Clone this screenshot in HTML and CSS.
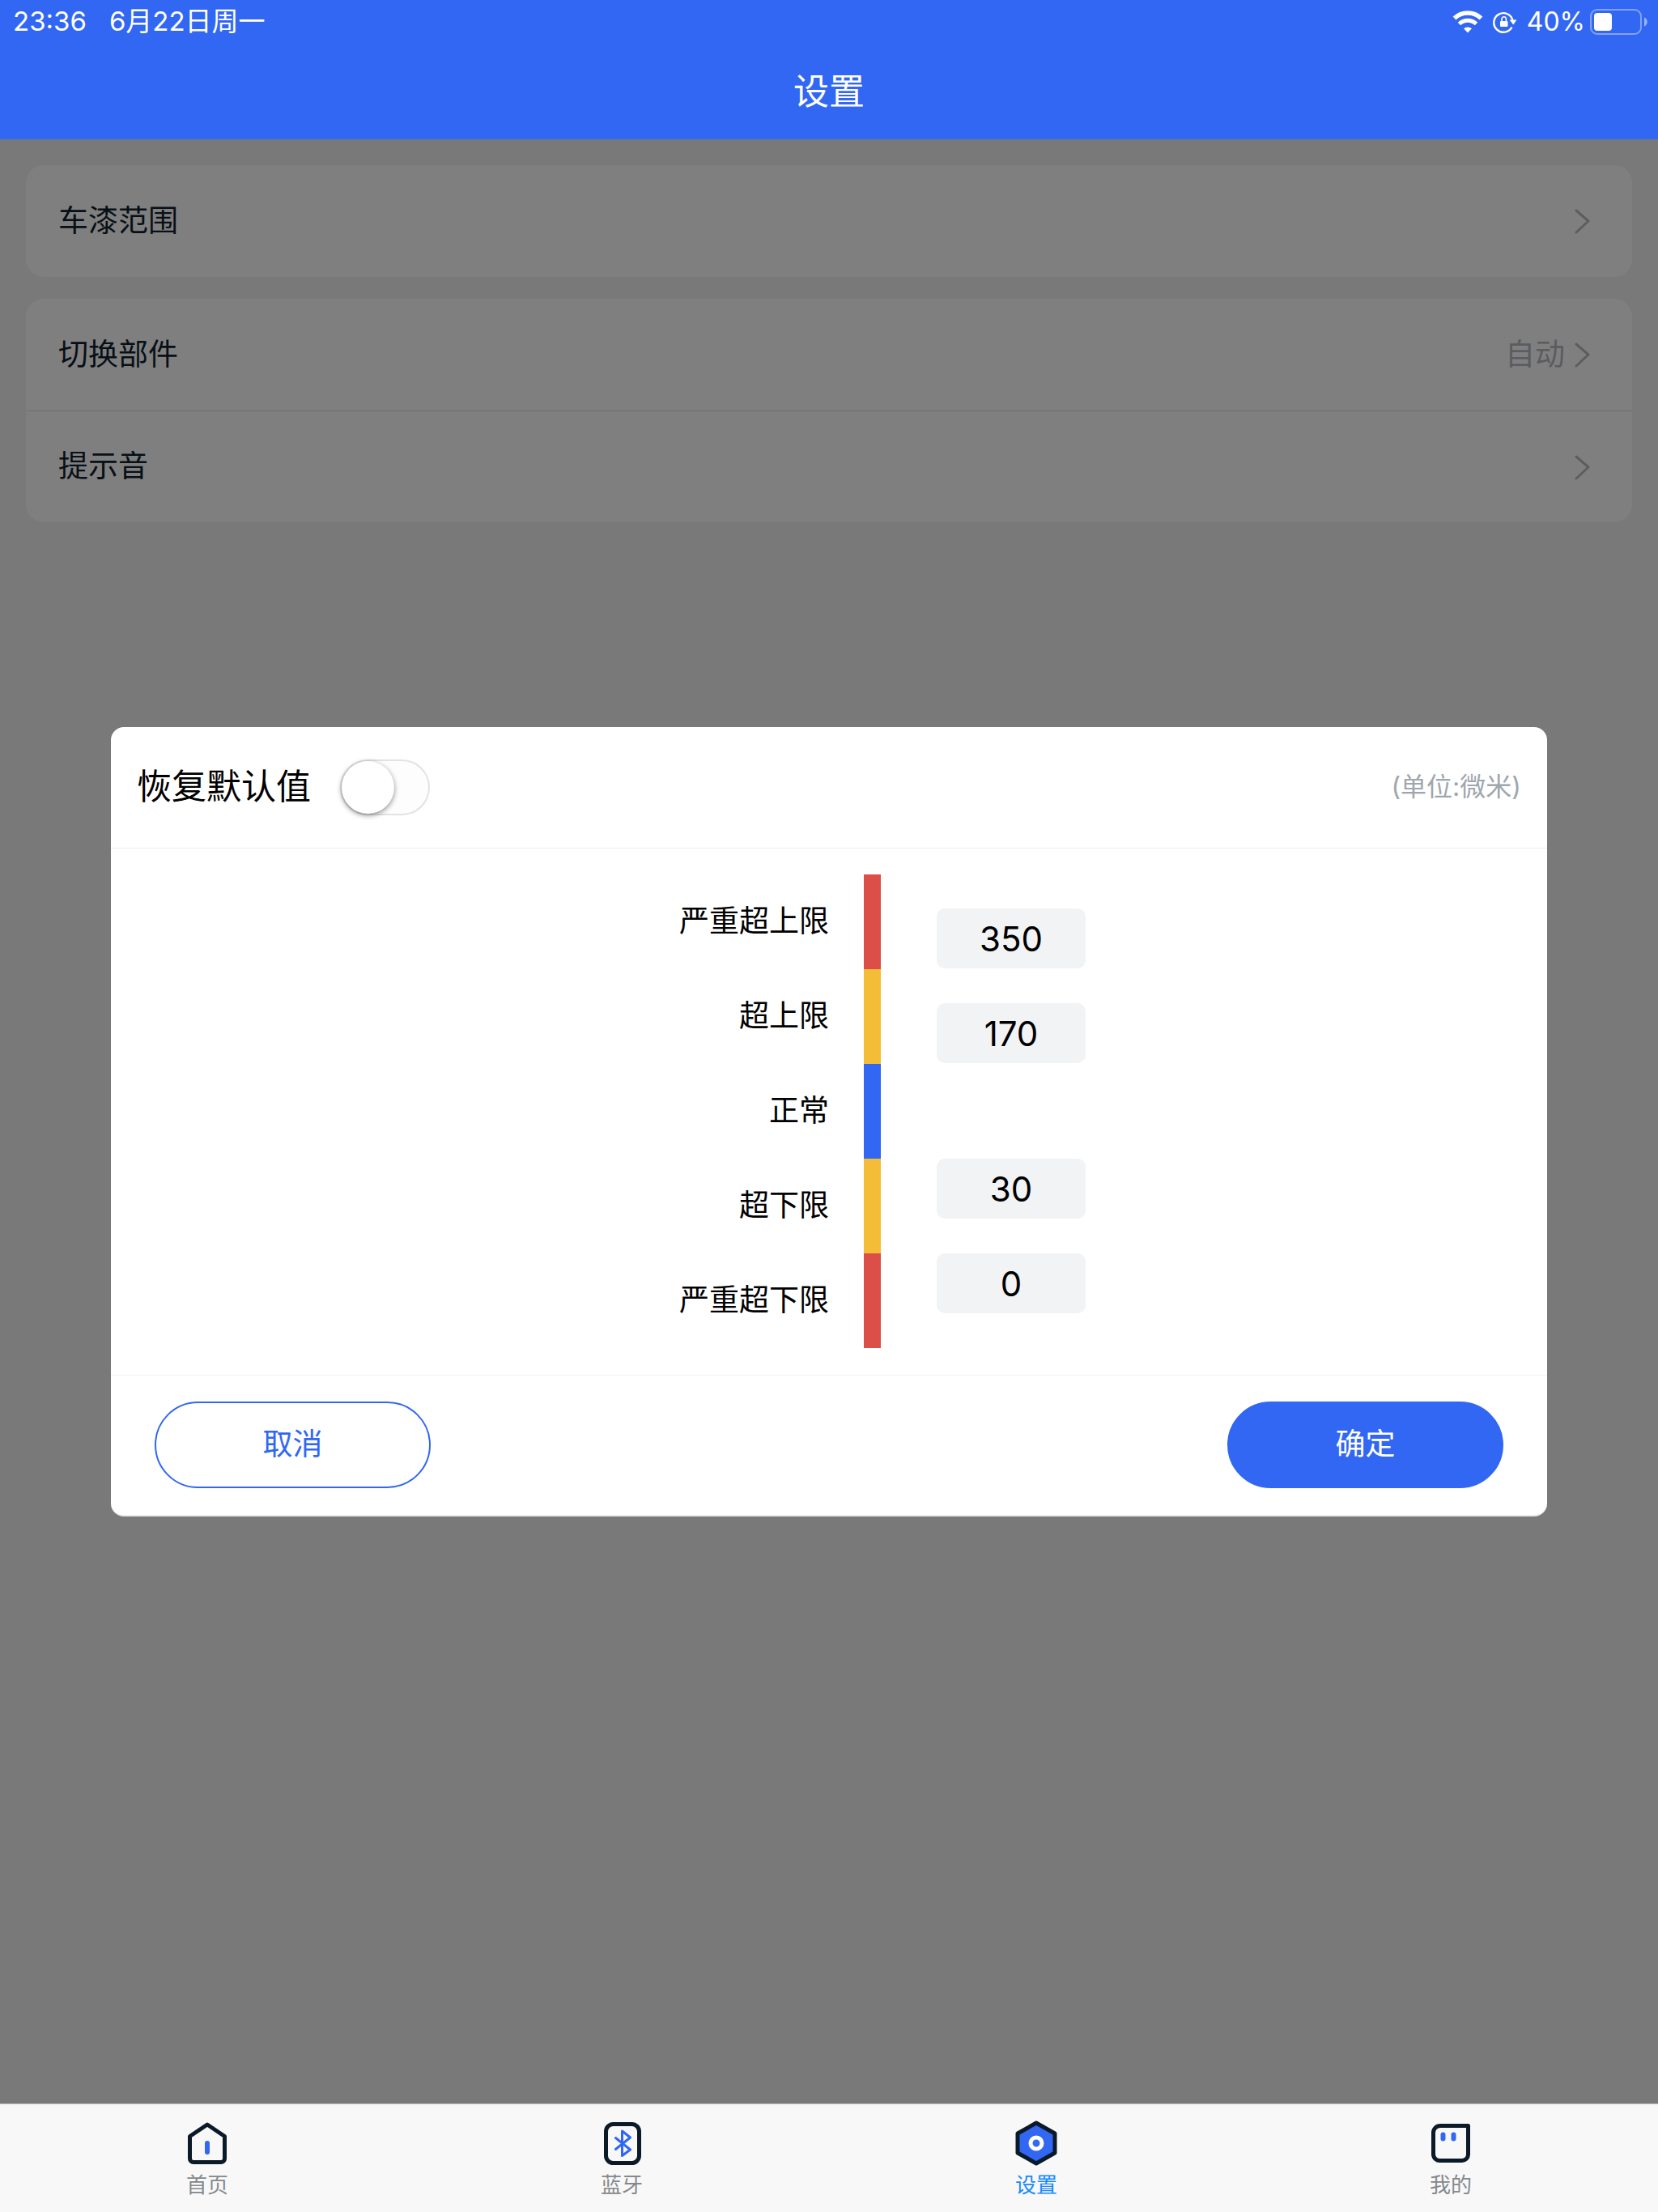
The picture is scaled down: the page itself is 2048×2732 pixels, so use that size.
FILE: index.html
```
<!DOCTYPE html>
<html lang="zh-CN">
<head>
  <meta charset="UTF-8">
  <meta name="viewport" content="width=device-width, initial-scale=1">
  <title>设置</title>
  <link rel="stylesheet" href="styles.css">
</head>
<body>

  <header class="header">
    <div class="status-bar">
      <div class="status-left">
        <span>23:36</span>
        <span>6月22日周一</span>
      </div>
      <div class="status-right">
        <svg class="icon-wifi" viewBox="0 0 38 28">
          <path d="M2.500 9.500a24 24 0 0 1 33 0" fill="none" stroke="#fff" stroke-width="5.500"/>
          <path d="M8.500 16.500a15 15 0 0 1 21 0" fill="none" stroke="#fff" stroke-width="5"/>
          <path d="M19 27.500l-5-5.200a7.500 7.500 0 0 1 10 0z" fill="#fff"/>
        </svg>
        <svg class="icon-lock" viewBox="0 0 30 28">
          <path d="M23.500 20.500A11.800 11.800 0 1 1 24.600 12.500" fill="none" stroke="#fff" stroke-width="2.400"/>
          <path d="M20.500 11.500h9l-4.200 6z" fill="#fff"/>
          <rect x="9" y="13" width="9.500" height="7" rx="1" fill="#fff"/>
          <path d="M11 13v-2.500a2.700 2.700 0 0 1 5.400 0V13" fill="none" stroke="#fff" stroke-width="1.600"/>
        </svg>
        <span class="battery-text">40%</span>
        <svg class="icon-battery" viewBox="0 0 72 32">
          <rect x="1" y="1" width="62" height="30" rx="8" fill="none" stroke="#fff" stroke-opacity="0.4" stroke-width="2"/>
          <rect x="5" y="5" width="22" height="22" rx="4" fill="#fff"/>
          <path d="M67 10.500c5 2 5 9 0 11z" fill="#fff" fill-opacity="0.5"/>
        </svg>
      </div>
    </div>
    <h1 class="nav-title">设置</h1>
  </header>

  <main class="main">
    <nav class="card">
      <a class="row" href="#range">
        <span class="row-label">车漆范围</span>
        <svg class="arrow" viewBox="0 0 32 32"><path d="M3 3l15 13L3 30"/></svg>
      </a>
    </nav>
    <nav class="card">
      <a class="row" href="#part">
        <span class="row-label">切换部件</span>
        <span class="row-value">自动</span>
        <svg class="arrow" viewBox="0 0 32 32"><path d="M3 3l15 13L3 30"/></svg>
      </a>
      <a class="row" href="#sound">
        <span class="row-label">提示音</span>
        <svg class="arrow" viewBox="0 0 32 32"><path d="M3 3l15 13L3 30"/></svg>
      </a>
    </nav>

    <!-- 车漆范围弹窗 -->
    <div class="mask">
      <form class="modal" role="dialog" aria-label="车漆范围">
        <div class="modal-header">
          <label for="resetSwitch">恢复默认值</label>
          <input type="checkbox" class="switch" id="resetSwitch">
          <span class="unit">(单位:微米)</span>
        </div>

        <div class="modal-body">
          <div class="labels">
            <label for="upperSevere">严重超上限</label>
            <label for="upper">超上限</label>
            <span>正常</span>
            <label for="lower">超下限</label>
            <label for="lowerSevere">严重超下限</label>
          </div>
          <div class="levels">
            <div class="bar">
              <div class="red"></div>
              <div class="yellow"></div>
              <div class="blue"></div>
              <div class="yellow"></div>
              <div class="red"></div>
            </div>
            <div class="inputs">
              <div class="input-group">
                <input type="text" inputmode="numeric" id="upperSevere" value="350">
                <input type="text" inputmode="numeric" id="upper" value="170">
              </div>
              <div class="input-group">
                <input type="text" inputmode="numeric" id="lower" value="30">
                <input type="text" inputmode="numeric" id="lowerSevere" value="0">
              </div>
            </div>
          </div>
        </div>

        <div class="modal-footer">
          <button type="button" class="btn btn-cancel">取消</button>
          <button type="button" class="btn btn-ok">确定</button>
        </div>
      </form>
    </div>
  </main>

  <nav class="tabbar">
    <a class="tab" href="#home">
      <svg viewBox="0 0 56 56" fill="none">
        <path d="M28 5L49.500 19.500V47a4.500 4.500 0 0 1-4.500 4.500H11A4.500 4.500 0 0 1 6.500 47V19.500z" stroke="#0b1a28" stroke-width="5" stroke-linejoin="round"/>
        <path d="M28 28v11" stroke="#3167f2" stroke-width="6" stroke-linecap="round"/>
      </svg>
      <span>首页</span>
    </a>
    <a class="tab" href="#bluetooth">
      <svg viewBox="0 0 56 56" fill="none">
        <rect x="8.500" y="4.500" width="41" height="48" rx="9" stroke="#0b1a28" stroke-width="5"/>
        <path d="M20.500 21.500L38.500 36 28.500 43.500V13L38.500 21 20.500 35.500" stroke="#3167f2" stroke-width="3" stroke-linecap="round" stroke-linejoin="round"/>
      </svg>
      <span>蓝牙</span>
    </a>
    <a class="tab active" href="#settings">
      <svg viewBox="0 0 56 56">
        <path d="M28 3L51 16v24L28 53 5 40V16z" fill="#3167f2" stroke="#0b1a28" stroke-width="5" stroke-linejoin="round"/>
        <circle cx="28" cy="28" r="7" fill="none" stroke="#fff" stroke-width="5"/>
      </svg>
      <span>设置</span>
    </a>
    <a class="tab" href="#mine">
      <svg viewBox="0 0 56 56" fill="none">
        <path d="M15 6.500H49.500V42A7.500 7.500 0 0 1 42 49.500H15A8 8 0 0 1 6.500 42V15A8.500 8.500 0 0 1 15 6.500z" stroke="#0b1a28" stroke-width="5" stroke-linejoin="round"/>
        <path d="M18.500 17.500v5M31.500 17.500v5" stroke="#3167f2" stroke-width="6" stroke-linecap="round"/>
      </svg>
      <span>我的</span>
    </a>
  </nav>

</body>
</html>
```
FILE: styles.css
```
* {
  box-sizing: border-box;
}
body {
  margin: 0;
  min-height: 100vh;
  display: flex;
  flex-direction: column;
  font-family: Inter, "Noto Sans CJK SC", sans-serif;
  font-size: 37px;
  line-height: 1.2;
  color: #000;
  background-color: #f2f2f2;
}
a {
  color: inherit;
  text-decoration: none;
}
input, button {
  font-family: inherit;
  line-height: inherit;
  margin: 0;
}

/* 顶部 */
.header {
  background-color: #3167f2;
  color: #fff;
}
.status-bar {
  display: flex;
  justify-content: space-between;
  align-items: center;
  height: 54px;
  padding: 0 12px 0 16px;
  font-size: 33px;
}
.status-left {
  display: flex;
  gap: 28px;
}
.status-right {
  display: flex;
  align-items: center;
}
.icon-wifi {
  width: 38px;
  height: 28px;
}
.icon-lock {
  width: 30px;
  height: 28px;
  margin-left: 12px;
}
.battery-text {
  margin: 0 6px 0 12px;
  font-size: 32px;
}
.icon-battery {
  width: 72px;
  height: 32px;
}
.nav-title {
  margin: 0;
  font-size: 44px;
  font-weight: normal;
  line-height: 118px;
  text-align: center;
}

/* 设置列表 */
.main {
  position: relative;
  flex: 1;
  display: flex;
  flex-direction: column;
  gap: 27px;
  padding: 32px;
}
.card {
  background-color: #fff;
  border-radius: 22px;
}
.row {
  display: flex;
  align-items: center;
  height: 138px;
  padding: 0 40px;
}
.row + .row {
  border-top: 1px solid #dfdfdf;
}
.row-label {
  flex: 1;
  color: #101e2e;
}
.row-value {
  margin-right: 11px;
  color: #b6b8be;
}
.arrow {
  width: 32px;
  height: 32px;
  fill: none;
  stroke: #bbb;
  stroke-width: 3;
  stroke-linecap: round;
  stroke-linejoin: round;
}

/* 弹窗 */
.mask {
  position: absolute;
  inset: 0;
  display: flex;
  align-items: center;
  padding: 0 137px;
  background-color: rgba(0, 0, 0, 0.5);
}
.modal {
  flex: 1;
  background-color: #fff;
  border-bottom: 2px solid #e9e9e9;
  border-radius: 16px;
}
.modal-header {
  display: flex;
  align-items: center;
  height: 150px;
  padding: 0 32px;
  border-bottom: 1px solid #efefef;
  font-size: 43px;
}
.switch {
  appearance: none;
  width: 111px;
  height: 69px;
  margin-left: 36px;
  border: 2px solid #e3e3e3;
  border-radius: 35px;
  background-color: #fdfdfd;
  cursor: pointer;
}
.switch::before {
  content: "";
  display: block;
  width: 65px;
  height: 65px;
  border-radius: 50%;
  background-color: #fff;
  box-shadow: 0 2px 6px rgba(0, 0, 0, 0.45);
}
.switch:checked {
  border-color: #3167f2;
  background-color: #3167f2;
}
.switch:checked::before {
  margin-left: auto;
}
.unit {
  margin-left: auto;
  font-size: 32px;
  color: #a0a6ae;
}
.modal-body {
  display: grid;
  grid-template-columns: 1fr 1fr;
  padding: 32px 0 33px;
  border-bottom: 1px solid #f2f2f2;
}
.labels {
  display: grid;
  grid-template-rows: repeat(5, 117px);
  align-items: center;
  justify-items: end;
}
.levels {
  display: flex;
  gap: 69px;
  padding-left: 43px;
}
.bar {
  display: grid;
  grid-template-rows: repeat(5, 1fr);
  width: 21px;
}
.red {
  background-color: #dc4f48;
}
.yellow {
  background-color: #f4bd37;
}
.blue {
  background-color: #3167f2;
}
.inputs {
  display: flex;
  flex-direction: column;
  justify-content: center;
  gap: 118px;
}
.input-group {
  display: flex;
  flex-direction: column;
  gap: 43px;
}
.input-group input {
  width: 184px;
  height: 74px;
  padding: 0;
  border: none;
  border-radius: 10px;
  background-color: #f2f3f5;
  color: #000;
  font-size: 42px;
  text-align: center;
}
.modal-footer {
  display: flex;
  justify-content: space-between;
  padding: 32px 54px 33px;
}
.btn {
  width: 341px;
  height: 107px;
  padding: 0;
  border: 2px solid #3167f2;
  border-radius: 54px;
  font-size: 37px;
  cursor: pointer;
}
.btn-cancel {
  background-color: #fff;
  color: #3167f2;
}
.btn-ok {
  background-color: #3167f2;
  color: #fff;
}

/* 底部导航 */
.tabbar {
  display: flex;
  height: 134px;
  border-top: 1px solid #c4c4c4;
  background-color: #f8f8f8;
}
.tab {
  flex: 1;
  display: flex;
  flex-direction: column;
  align-items: center;
  gap: 8px;
  padding-top: 20px;
  font-size: 26px;
  color: #85888c;
}
.tab svg {
  width: 56px;
  height: 56px;
}
.tab.active {
  color: #1989fa;
}
```
